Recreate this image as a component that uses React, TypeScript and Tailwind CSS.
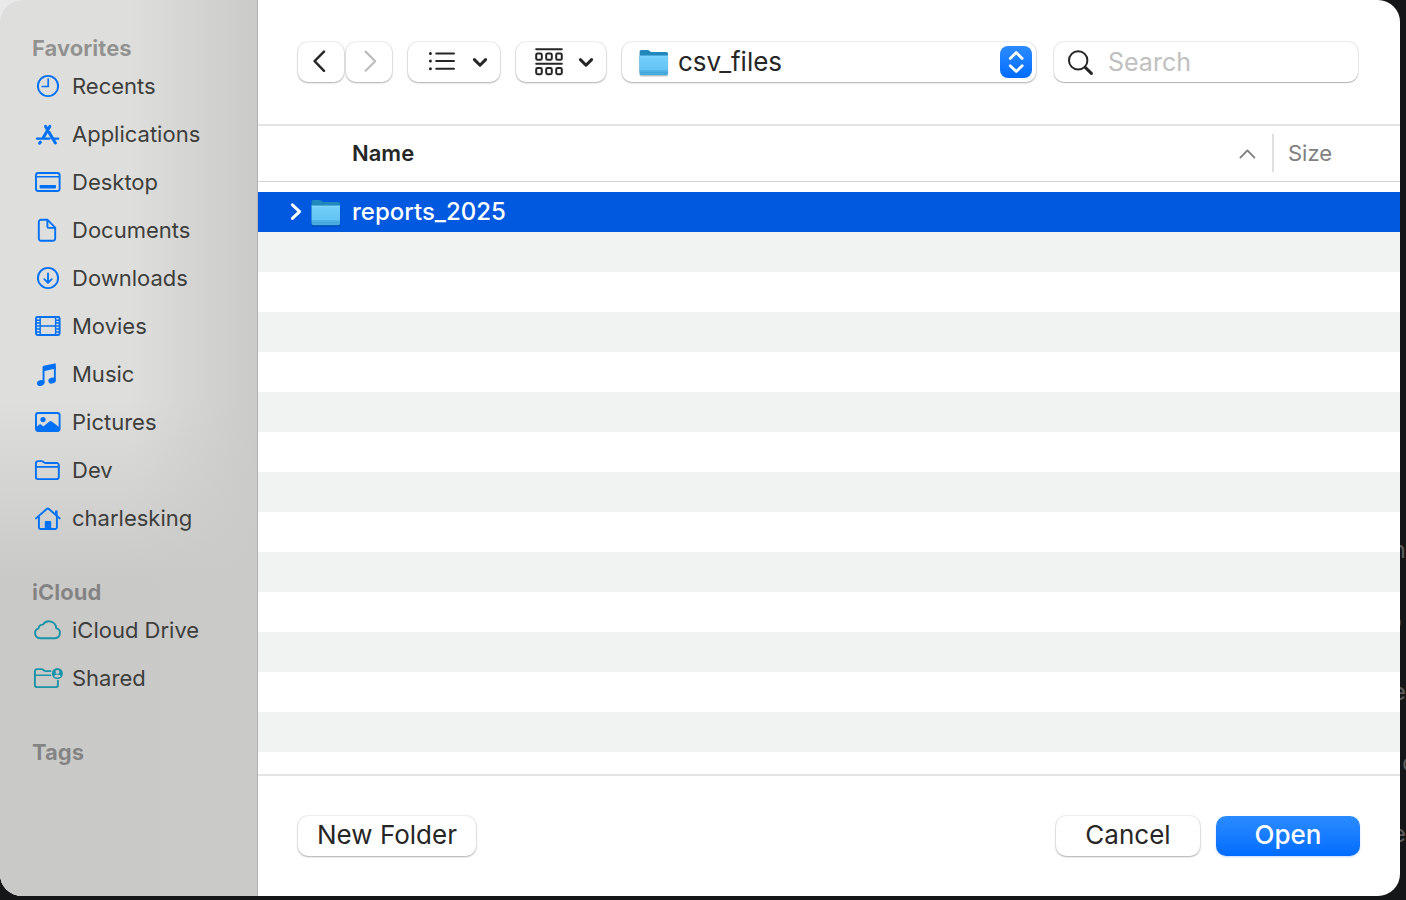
import type { ReactNode } from 'react';

type Place = { label: string; icon: ReactNode };

function Glyph({ children, tone = 'text-[#0070f5]' }: { children: ReactNode; tone?: string }) {
  return (
    <svg
      viewBox="0 0 32 32"
      className={`size-8 shrink-0 ${tone}`}
      fill="none"
      stroke="currentColor"
      strokeWidth="1.9"
      strokeLinecap="round"
      strokeLinejoin="round"
      aria-hidden="true"
    >
      {children}
    </svg>
  );
}

const teal = 'text-[#1b93a8]';

const favorites: Place[] = [
  {
    label: 'Recents',
    icon: (
      <Glyph>
        <circle cx="16" cy="16" r="10.1" />
        <path d="M16.2 9v7.5H10.2" strokeWidth="1.7" />
      </Glyph>
    ),
  },
  {
    label: 'Applications',
    icon: (
      <Glyph>
        <g strokeWidth="3">
          <path d="M17.8 8.4 11.4 19.4" />
          <path d="M8.4 24.1 7.6 25.2" />
          <path d="M13.6 8.4 14.6 10.2M17 14.4 23.4 25" />
        </g>
        <path d="M5 20.6H17.5M22.4 20.6H26.2" strokeWidth="2.4" />
      </Glyph>
    ),
  },
  {
    label: 'Desktop',
    icon: (
      <Glyph>
        <rect x="4" y="7" width="23.6" height="18" rx="2.2" />
        <path d="M4 10.8H27.6" strokeWidth="1.4" />
        <rect x="7.6" y="19" width="16.4" height="3.4" rx="0.8" fill="currentColor" stroke="none" />
      </Glyph>
    ),
  },
  {
    label: 'Documents',
    icon: (
      <Glyph>
        <path d="M9 5.8H15.6L23.2 13.6V24.6A2.2 2.2 0 0 1 21 26.8H9A2.2 2.2 0 0 1 6.8 24.6V8A2.2 2.2 0 0 1 9 5.8Z" />
        <path d="M15.4 6V12.4A1.5 1.5 0 0 0 16.9 13.9H23" />
      </Glyph>
    ),
  },
  {
    label: 'Downloads',
    icon: (
      <Glyph>
        <circle cx="16" cy="16" r="10.1" />
        <path d="M16 11.3V20.6M12.3 17.2 16 20.8 19.7 17.2" strokeWidth="1.8" />
      </Glyph>
    ),
  },
  {
    label: 'Movies',
    icon: (
      <Glyph>
        <rect x="4" y="7" width="23.6" height="18" rx="1.4" />
        <path
          d="M8.2 7V25M23.6 7V25M8.2 16H23.6M4.5 10.2H8M4.5 13H8M4.5 16H8M4.5 19H8M4.5 22H8M23.8 10.2H27.2M23.8 13H27.2M23.8 16H27.2M23.8 19H27.2M23.8 22H27.2"
          strokeWidth="1.4"
        />
      </Glyph>
    ),
  },
  {
    label: 'Music',
    icon: (
      <Glyph>
        <path d="M10.6 9.2Q10.6 8 11.8 7.7L22.6 5.4Q23.8 5.2 23.8 6.4V10.6L12.5 13V25H10.6Z" fill="currentColor" stroke="none" />
        <path d="M21.9 9H23.8V22.5H21.9Z" fill="currentColor" stroke="none" />
        <ellipse cx="8.7" cy="25" rx="3.8" ry="2.9" fill="currentColor" stroke="none" transform="rotate(-18 8.7 25)" />
        <ellipse cx="20.1" cy="22.6" rx="3.8" ry="2.9" fill="currentColor" stroke="none" transform="rotate(-18 20.1 22.6)" />
      </Glyph>
    ),
  },
  {
    label: 'Pictures',
    icon: (
      <Glyph>
        <rect x="4" y="7" width="23.6" height="18" rx="2.2" />
        <circle cx="11" cy="13.6" r="2.6" fill="currentColor" stroke="none" />
        <path
          d="M4 21.2 7.4 18.6Q8.2 18 9 18.6L11.3 20.6 17.4 15.4Q18.6 14.5 19.8 15.4L27.6 21.5V23A2 2 0 0 1 25.6 25H6A2 2 0 0 1 4 23Z"
          fill="currentColor"
          stroke="none"
        />
      </Glyph>
    ),
  },
  {
    label: 'Dev',
    icon: (
      <Glyph>
        <path d="M3.9 9.3A2.2 2.2 0 0 1 6.1 7.1H9.6Q10.6 7.1 11.3 7.8L12.2 8.5Q12.9 9 13.8 9H24.6A2.2 2.2 0 0 1 26.8 11.2V22.9A2.2 2.2 0 0 1 24.6 25.1H6.1A2.2 2.2 0 0 1 3.9 22.9Z" />
        <path d="M4 12.9H26.6" strokeWidth="1.6" />
      </Glyph>
    ),
  },
  {
    label: 'charlesking',
    icon: (
      <Glyph>
        <path d="M4 16.4 14.7 7Q15.8 6.1 16.9 7L27.7 16.4" />
        <path d="M6.9 14.4V25.2A1.8 1.8 0 0 0 8.7 27H23.1A1.8 1.8 0 0 0 24.9 25.2V14.4" />
        <path d="M24.3 9.6V13" strokeWidth="2.6" />
        <path d="M12.8 27V20Q12.8 19 13.8 19H18.2Q19.2 19 19.2 20V27Z" fill="currentColor" stroke="none" />
      </Glyph>
    ),
  },
];

const icloud: Place[] = [
  {
    label: 'iCloud Drive',
    icon: (
      <Glyph tone={teal}>
        <path d="M8 24.2A5.1 5.1 0 0 1 6.5 14.3 4.3 4.3 0 0 1 11 10.6 7.2 7.2 0 0 1 24.2 14.2 5.1 5.1 0 0 1 23 24.2Z" />
      </Glyph>
    ),
  },
  {
    label: 'Shared',
    icon: (
      <Glyph tone={teal}>
        <path d="M18.6 9.1H13.7Q12.8 9.1 12 8.5L11.2 7.8Q10.4 7.1 9.4 7.1H5.1A2.2 2.2 0 0 0 2.9 9.3V22.9A2.2 2.2 0 0 0 5.1 25.1H23.7A2.2 2.2 0 0 0 25.9 22.9V18.8" />
        <path d="M3 13.2H18.6" strokeWidth="1.5" />
        <circle cx="25.4" cy="11.5" r="5.5" fill="currentColor" stroke="none" />
        <circle cx="25.4" cy="9.9" r="1.9" fill="#c9c9c8" stroke="none" />
        <path d="M22 14.6Q22.6 12.6 25.4 12.6T28.8 14.6Q25.4 16.4 22 14.6Z" fill="#c9c9c8" stroke="none" />
      </Glyph>
    ),
  },
];

function SidebarSection({ title, places }: { title: string; places: Place[] }) {
  return (
    <section>
      <h2 className="flex h-7 items-center text-[22px] font-bold text-black/35">{title}</h2>
      <ul>
        {places.map((place) => (
          <li key={place.label}>
            <a href="#" className="flex h-12 items-center gap-2 text-[22px] text-[#3e3e3d]">
              {place.icon}
              {place.label}
            </a>
          </li>
        ))}
      </ul>
    </section>
  );
}

function FolderIcon({ className }: { className: string }) {
  return (
    <svg viewBox="0 0 32 32" className={className} aria-hidden="true">
      <defs>
        <linearGradient id="folder-front" x1="0" y1="0" x2="0" y2="1">
          <stop offset="0" stopColor="#74cffb" />
          <stop offset="0.75" stopColor="#62c3f3" />
          <stop offset="1" stopColor="#45a9dc" />
        </linearGradient>
      </defs>
      <rect x="1.6" y="9" width="28.6" height="21.4" rx="1.6" fill="#000" opacity="0.22" />
      <path d="M1.6 5.6Q1.6 4 3.2 4H9.6Q10.6 4 11.4 4.7L12.2 5.4Q12.9 6 13.9 6H28.4Q30 6 30 7.6V26H1.6Z" fill="#2088bd" />
      <path d="M1.6 9.9H30V27.6Q30 29.2 28.4 29.2H3.2Q1.6 29.2 1.6 27.6Z" fill="url(#folder-front)" />
      <path d="M1.6 10H30" stroke="#8fdcff" strokeWidth="0.8" />
      <path d="M1.6 25H30M1.6 26.8H30" stroke="#3090c4" strokeWidth="0.7" opacity="0.8" />
    </svg>
  );
}

function MenuChevron() {
  return (
    <svg viewBox="0 0 16 12" className="h-3 w-4" fill="none" stroke="#262626" strokeWidth="3" strokeLinecap="round" strokeLinejoin="round" aria-hidden="true">
      <path d="M2.4 3.6 8 9.2 13.6 3.6" />
    </svg>
  );
}

const control =
  'h-10 rounded-[10px] bg-white shadow-[0_0_0_1px_rgba(0,0,0,0.06),0_1px_2px_rgba(0,0,0,0.28)] flex items-center justify-center shrink-0';

function Toolbar() {
  return (
    <header className="flex h-[126px] shrink-0 items-center gap-4 border-b-2 border-[#e4e4e4] pr-[42px] pl-10">
      <div className="flex gap-0.5">
        <button type="button" aria-label="Back" className={`${control} w-[46px]`}>
          <svg viewBox="0 0 16 24" className="h-6 w-4" fill="none" stroke="#262626" strokeWidth="2.4" strokeLinecap="round" strokeLinejoin="round">
            <path d="M11 1.6 1.6 11.2 11 20.8" />
          </svg>
        </button>
        <button type="button" aria-label="Forward" disabled className={`${control} w-[46px]`}>
          <svg viewBox="0 0 16 24" className="h-6 w-4" fill="none" stroke="#bdbdbd" strokeWidth="2.2" strokeLinecap="round" strokeLinejoin="round">
            <path d="M4.6 1.6 14.2 11.2 4.6 20.8" />
          </svg>
        </button>
      </div>
      <button type="button" aria-label="List view" className={`${control} w-[92px] gap-4 pl-2`}>
        <svg viewBox="0 0 28 24" className="h-6 w-7" fill="none" stroke="#262626" strokeWidth="2" strokeLinecap="round">
          <path d="M8.2 3.4H26M8.2 11H26M8.2 18.8H26" />
          <path d="M2.4 3.4h.01M2.4 11h.01M2.4 18.8h.01" strokeWidth="3" />
        </svg>
        <MenuChevron />
      </button>
      <button type="button" aria-label="Group items" className={`${control} w-[90px] gap-3 pl-1.5`}>
        <svg viewBox="0 0 32 32" className="size-8" fill="none" stroke="#262626" strokeWidth="2" strokeLinecap="round">
          <path d="M2.2 3.2H27.8M2.2 17.8H27.8" />
          <rect x="2.2" y="7.6" width="5.6" height="6.2" rx="1.4" />
          <rect x="12.2" y="7.6" width="5.6" height="6.2" rx="1.4" />
          <rect x="22.2" y="7.6" width="5.6" height="6.2" rx="1.4" />
          <rect x="2.2" y="22" width="5.6" height="6.2" rx="1.4" />
          <rect x="12.2" y="22" width="5.6" height="6.2" rx="1.4" />
          <rect x="22.2" y="22" width="5.6" height="6.2" rx="1.4" />
        </svg>
        <MenuChevron />
      </button>
      <div className="relative min-w-0 flex-1">
        <FolderIcon className="pointer-events-none absolute top-1 left-4 size-8" />
        <select
          aria-label="Current folder"
          className="block h-10 w-full appearance-none rounded-[10px] bg-white pr-12 pb-0.5 pl-14 text-[26px] text-[#262626] shadow-[0_0_0_1px_rgba(0,0,0,0.06),0_1px_2px_rgba(0,0,0,0.28)]"
        >
          <option>csv_files</option>
        </select>
        <span className="pointer-events-none absolute top-1 right-1 flex size-8 items-center justify-center rounded-lg bg-linear-to-b from-[#2a8bff] to-[#006cff]">
          <svg viewBox="0 0 32 32" className="size-8" fill="none" stroke="#fff" strokeWidth="2.8" strokeLinecap="round" strokeLinejoin="round" aria-hidden="true">
            <path d="M10.2 12.4 16.2 6.6 22.2 12.4M10.2 19.8 16.2 25.6 22.2 19.8" />
          </svg>
        </span>
      </div>
      <label className="ml-0.5 flex h-10 w-[304px] shrink-0 items-center gap-3 rounded-[10px] bg-white px-3 shadow-[0_0_0_1px_rgba(0,0,0,0.08),0_1px_1px_rgba(0,0,0,0.24)]">
        <svg viewBox="0 0 28 28" className="size-7 shrink-0" fill="none" stroke="#262626" strokeLinecap="round" aria-hidden="true">
          <circle cx="12.2" cy="12.4" r="9.2" strokeWidth="2" />
          <path d="M19.2 19.4 25.4 25.4" strokeWidth="3" />
        </svg>
        <input
          type="search"
          aria-label="Search"
          placeholder="Search"
          className="w-full min-w-0 bg-transparent pt-0.5 pl-0.5 text-[25px] outline-none placeholder:text-[#c0c0c0]"
        />
      </label>
    </header>
  );
}

function FileList() {
  return (
    <div className="flex-1 bg-[linear-gradient(#fff_50%,#f1f3f2_50%)] bg-[size:100%_80px] bg-[position:0_66px]">
      <table className="w-full table-fixed border-separate border-spacing-0 text-left">
        <colgroup>
          <col />
          <col className="w-32" />
        </colgroup>
        <thead className="bg-white">
          <tr>
            <th scope="col" aria-sort="ascending" className="p-0 pb-2.5">
              <div className="flex h-14 items-center justify-between border-b border-[#d4d4d4] pr-4 pb-px pl-[94px] text-[22px] font-semibold text-[#262626]">
                Name
                <svg viewBox="0 0 18 12" className="h-3 w-[18px]" fill="none" stroke="#7d7d7d" strokeWidth="1.8" strokeLinecap="round" strokeLinejoin="round" aria-hidden="true">
                  <path d="M2.4 10.6 9.4 3.4 16.4 10.6" />
                </svg>
              </div>
            </th>
            <th scope="col" className="p-0 pb-2.5 text-[22px] font-normal text-[#808080]">
              <div className="flex h-14 items-center border-b border-[#d4d4d4] pb-px">
                <span className="flex h-[38px] items-center border-l-2 border-[#e0e0e0] pl-3.5">Size</span>
              </div>
            </th>
          </tr>
        </thead>
        <tbody>
          <tr className="h-10 bg-[#0059df]">
            <td className="p-0">
              <div className="flex h-10 items-center text-2xl font-medium text-white">
                <button type="button" aria-label="Expand reports_2025" className="ml-[30px] flex w-[22px]">
                  <svg viewBox="0 0 16 20" className="h-5 w-4" fill="none" stroke="#fff" strokeWidth="3" strokeLinecap="round" strokeLinejoin="round">
                    <path d="M4.4 2.8 11.6 9.6 4.4 16.4" />
                  </svg>
                </button>
                <FolderIcon className="mr-2.5 size-8" />
                reports_2025
              </div>
            </td>
            <td className="p-0" />
          </tr>
        </tbody>
      </table>
    </div>
  );
}

const backdropText = [
  { letter: 'n', place: 'justify-end' },
  { letter: 'o', place: 'justify-end pr-1' },
  { letter: 'e', place: 'justify-end' },
  { letter: 'c', place: 'pl-0.5' },
  { letter: 'e', place: 'justify-end' },
];

export default function App() {
  return (
    <div className="flex min-h-screen bg-[linear-gradient(135deg,#e9e9e9_20px,#151617_60px)] pb-1 font-['Inter',sans-serif]">
      <main className="flex min-w-0 flex-1 overflow-hidden rounded-[22px] bg-white">
        <nav
          aria-label="Locations"
          className="flex w-[258px] shrink-0 flex-col gap-9 border-r border-[#b2b2b1] bg-[#dededc] bg-[linear-gradient(to_right,rgba(201,201,200,0)_130px,#cacac9_258px),linear-gradient(to_bottom,rgba(201,201,200,0)_400px,#c9c9c8_580px)] pt-[34px] pl-8"
        >
          <SidebarSection title="Favorites" places={favorites} />
          <SidebarSection title="iCloud" places={icloud} />
          <SidebarSection title="Tags" places={[]} />
        </nav>
        <div className="flex min-w-0 flex-1 flex-col">
          <Toolbar />
          <FileList />
          <footer className="flex h-[122px] shrink-0 items-center gap-4 border-t-2 border-[#e4e4e4] px-10 text-[26px] text-[#262626]">
            <button type="button" className={`${control} w-[178px] pb-1`}>
              New Folder
            </button>
            <button type="button" className={`${control} ml-auto w-36 pb-1`}>
              Cancel
            </button>
            <button
              type="button"
              className="flex h-10 w-36 shrink-0 items-center justify-center rounded-[10px] bg-linear-to-b from-[#2a8bff] to-[#006cff] pb-1 font-medium text-white shadow-[0_1px_2px_rgba(0,108,255,0.24)]"
            >
              Open
            </button>
          </footer>
        </div>
      </main>
      <div aria-hidden="true" className="flex w-1.5 shrink-0 flex-col overflow-hidden pt-[514px] text-2xl text-[#5c5c5c]">
        {backdropText.map(({ letter, place }, i) => (
          <span key={i} className={`flex h-[71px] items-center ${place}`}>
            {letter}
          </span>
        ))}
      </div>
    </div>
  );
}
